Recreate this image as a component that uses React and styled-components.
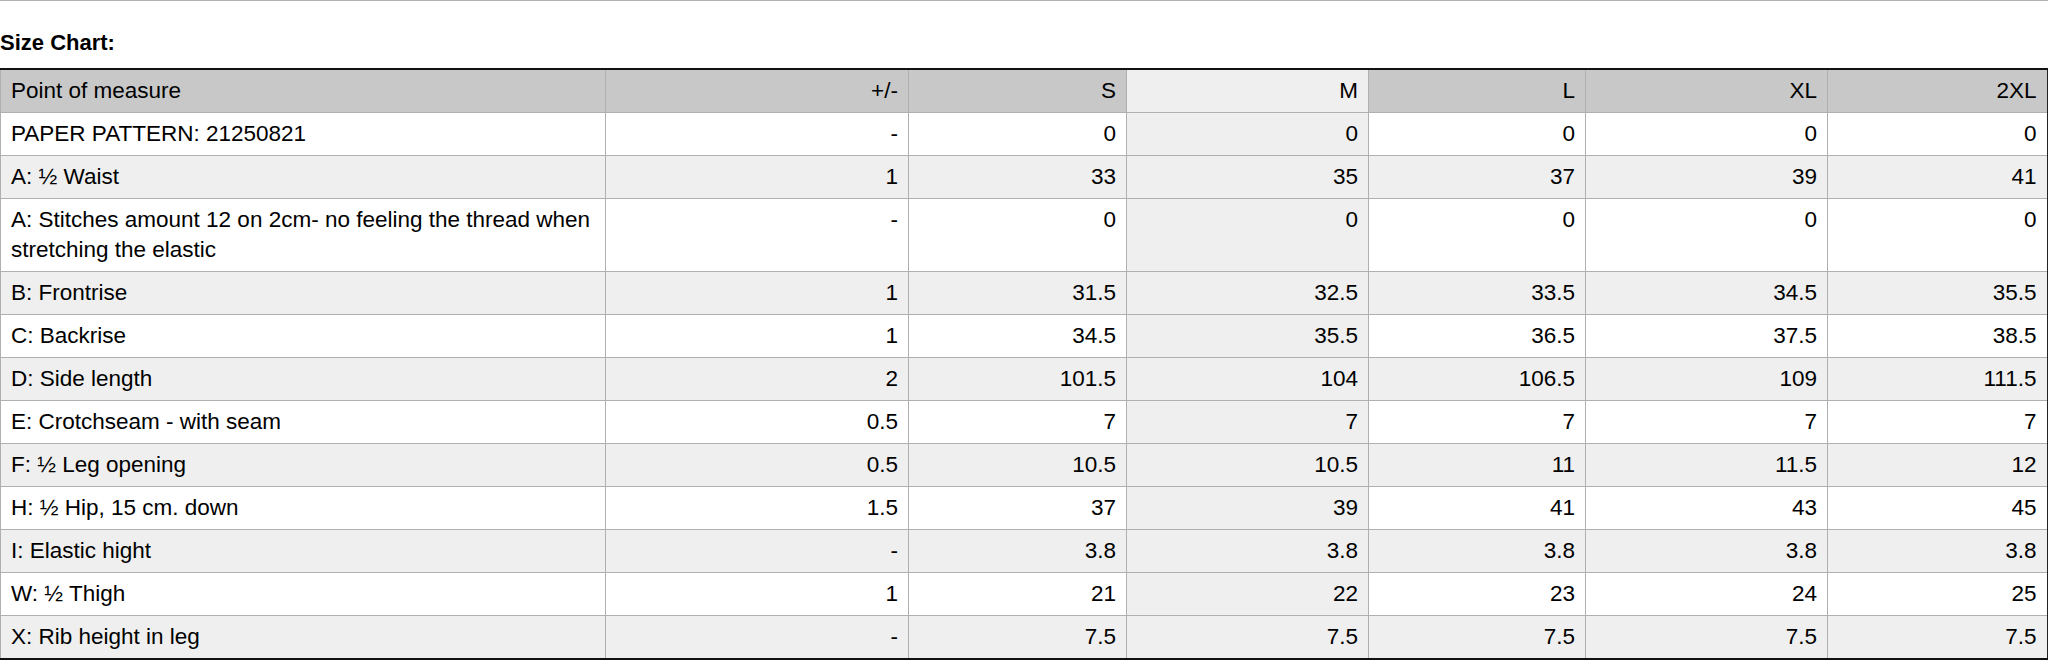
import React from "react";
import { styled, createGlobalStyle } from "styled-components";

const GlobalStyle = createGlobalStyle`
  html, body {
    margin: 0;
    padding: 0;
    background: #fff;
  }
  body {
    font-family: "Liberation Sans", Arial, sans-serif;
    color: #000;
  }
`;

const sizes = ["S", "M", "L", "XL", "2XL"];

const rows = [
  { name: "PAPER PATTERN: 21250821", tol: "-", values: ["0", "0", "0", "0", "0"] },
  { name: "A: ½ Waist", tol: "1", values: ["33", "35", "37", "39", "41"] },
  {
    name: "A: Stitches amount 12 on 2cm- no feeling the thread when stretching the elastic",
    tol: "-",
    values: ["0", "0", "0", "0", "0"],
  },
  { name: "B: Frontrise", tol: "1", values: ["31.5", "32.5", "33.5", "34.5", "35.5"] },
  { name: "C: Backrise", tol: "1", values: ["34.5", "35.5", "36.5", "37.5", "38.5"] },
  { name: "D: Side length", tol: "2", values: ["101.5", "104", "106.5", "109", "111.5"] },
  { name: "E: Crotchseam - with seam", tol: "0.5", values: ["7", "7", "7", "7", "7"] },
  { name: "F: ½ Leg opening", tol: "0.5", values: ["10.5", "10.5", "11", "11.5", "12"] },
  { name: "H: ½ Hip, 15 cm. down", tol: "1.5", values: ["37", "39", "41", "43", "45"] },
  { name: "I: Elastic hight", tol: "-", values: ["3.8", "3.8", "3.8", "3.8", "3.8"] },
  { name: "W: ½ Thigh", tol: "1", values: ["21", "22", "23", "24", "25"] },
  { name: "X: Rib height in leg", tol: "-", values: ["7.5", "7.5", "7.5", "7.5", "7.5"] },
];

// column widths measured off the chart
const colWidths = [605, 303, 218, 242, 217, 242, 220];
const highlightCol = "M";

const App = () => {
  return (
    <Page>
      <GlobalStyle />
      <Title>Size Chart:</Title>
      <ChartTable>
        <colgroup>
          {colWidths.map((w, i) => (
            <col key={i} style={{ width: w }} />
          ))}
        </colgroup>
        <thead>
          <tr>
            <HeadCell $align="left">Point of measure</HeadCell>
            <HeadCell>+/-</HeadCell>
            {sizes.map((s) => (
              <HeadCell key={s} $highlight={s === highlightCol}>
                {s}
              </HeadCell>
            ))}
          </tr>
        </thead>
        <tbody>
          {rows.map((row, i) => (
            <Row key={row.name} $striped={i % 2 === 1}>
              <Cell $align="left">{row.name}</Cell>
              <Cell>{row.tol}</Cell>
              {row.values.map((v, j) => (
                <Cell key={j} $highlight={sizes[j] === highlightCol}>
                  {v}
                </Cell>
              ))}
            </Row>
          ))}
        </tbody>
      </ChartTable>
    </Page>
  );
};

export default App;

const Page = styled.div`
  border-top: 1px solid #b2b2b2;
  padding-top: 27px;
`;

const Title = styled.div`
  font-size: 22px;
  font-weight: 700;
  line-height: 30px;
  margin-bottom: 10px;
`;

const ChartTable = styled.table`
  width: 2047px;
  table-layout: fixed;
  border-collapse: collapse;
  font-size: 22.5px;
  line-height: 30px;
  border-top: 2px solid #111;
  border-bottom: 2px solid #111;
  border-right: 2px solid #222;
  border-left: 1px solid #b0b0b0;
`;

const Row = styled.tr`
  background: ${(p) => (p.$striped ? "#efefef" : "#ffffff")};
`;

const Cell = styled.td`
  padding: 6px 10px 6px 10px;
  text-align: ${(p) => p.$align || "right"};
  vertical-align: top;
  border: 1px solid #b0b0b0;
  background: ${(p) => (p.$highlight ? "#efefef" : "transparent")};
  font-weight: 400;
`;

const HeadCell = styled.th`
  padding: 6px 10px 6px 10px;
  text-align: ${(p) => p.$align || "right"};
  vertical-align: top;
  font-weight: 400;
  border: 1px solid #b0b0b0;
  border-top: 2px solid #111;
  background: ${(p) => (p.$highlight ? "#efefef" : "#c8c8c8")};
`;
